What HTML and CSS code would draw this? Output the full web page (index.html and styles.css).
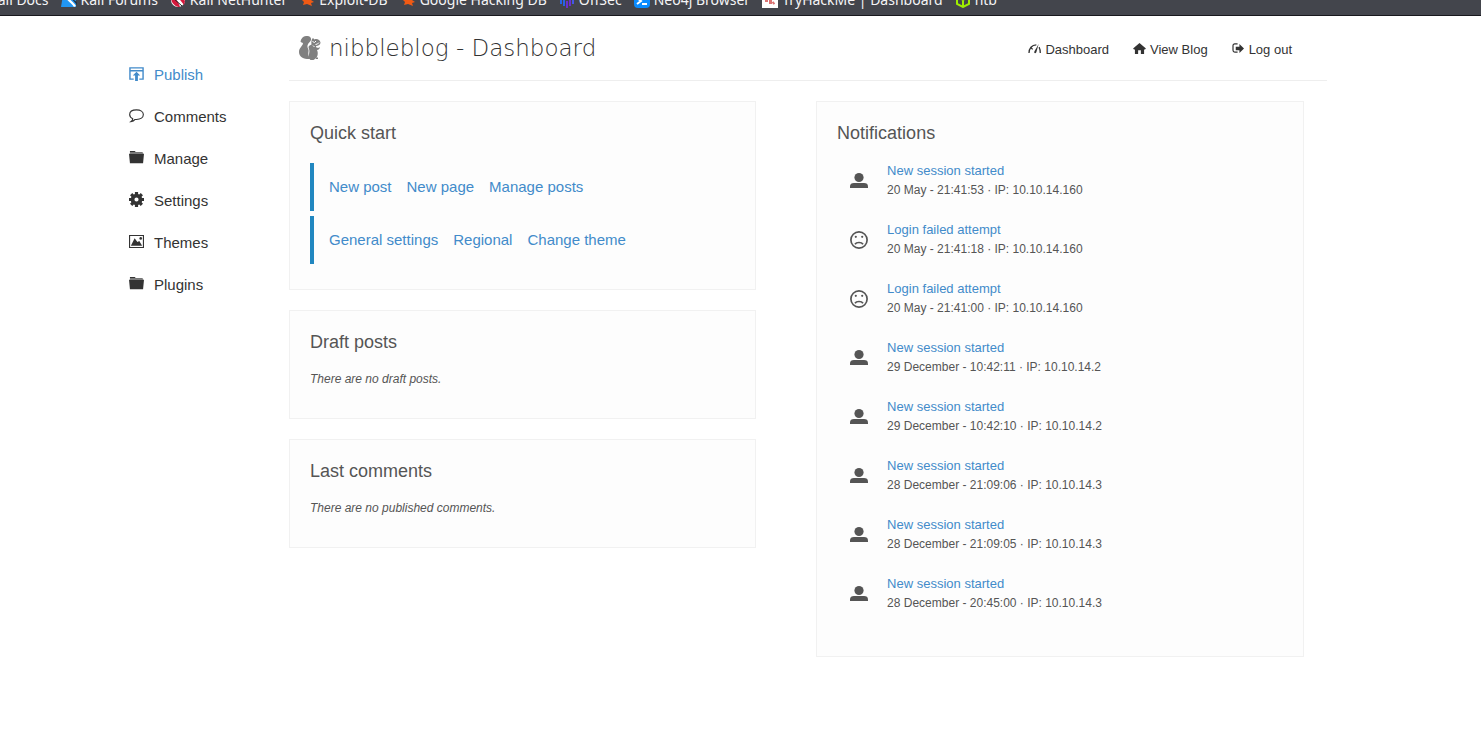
FILE: index.html
```html
<!DOCTYPE html>
<html lang="en">
<head>
<meta charset="utf-8">
<title>nibbleblog - Dashboard</title>
<link rel="stylesheet" href="styles.css">
</head>
<body>
<svg class="sprite" aria-hidden="true">
  <symbol id="folder" viewBox="0 0 16 16"><path fill="#777" d="M1 3V2l1-1h4l1 1h7l1 1v1H1z"/><path d="M1 1h5l1 1H1zM0 4h16l-1 10H1z"/></symbol>
  <symbol id="user" viewBox="0 0 18 18"><circle cx="9" cy="5.500" r="4.600"/><path d="M0 16v-1.500C0 12 1.500 11 4 11h10c2.500 0 4 1 4 3.500V16z"/></symbol>
  <symbol id="sad" viewBox="0 0 18 18"><g fill="none" stroke="currentColor" stroke-width="1.700"><circle cx="9" cy="9" r="8.100"/><path d="M5 13.300c1.500-2.400 6.500-2.400 8 0"/></g><circle cx="5.800" cy="5.800" r="1.100"/><circle cx="12.200" cy="5.800" r="1.100"/></symbol>
  <symbol id="bug" viewBox="0 0 16 16"><path fill="#f05a14" d="M1 6l4 1-1-5 5 4 5-1-2 3 3 2-3 1 1 3-5-2-4 1 1-3z"/></symbol>
</svg>

<nav class="bookmarks" aria-label="Bookmarks">
  <a href="#">Kali Docs</a>
  <a href="#"><svg viewBox="0 0 16 16"><path fill="#2196f3" d="M2 3h13v12H0z"/><path fill="#fff" d="M3 2c3 4 7 5 12 12l-2 1C10 10 5 9 3 2z"/><path fill="#234" d="M10 6l6 4v3z"/></svg>Kali Forums</a>
  <a href="#"><svg viewBox="0 0 16 16"><circle cx="8" cy="8" r="7" fill="#fff"/><path fill="#d5193d" d="M1 5c5 1 7 4 9 10-5 0-9-4-9-10zM7 4l7 9 1-4-5-7z"/><path stroke="#222" d="M3 6l9 8"/></svg>Kali NetHunter</a>
  <a href="#"><svg><use href="#bug"/></svg>Exploit-DB</a>
  <a href="#"><svg><use href="#bug"/></svg>Google Hacking DB</a>
  <a href="#"><svg viewBox="0 0 16 16" fill="none" stroke-width="2"><path stroke="#2864e8" d="M2 6v6M5 5v9"/><path stroke="#6a2fd0" d="M8 9v7M11 5v9"/><path stroke="#4556e4" d="M14 6v6"/></svg>OffSec</a>
  <a href="#"><svg viewBox="0 0 16 16"><rect width="16" height="16" rx="4" fill="#0a8cff"/><path fill="none" stroke="#fff" stroke-width="2" d="M3 6l4 3-4 3M8 12h5"/></svg>Neo4j Browser</a>
  <a href="#"><svg viewBox="0 0 16 16"><path fill="#fff" d="M0 0h16v16H0z"/><path fill="none" stroke="#db7474" stroke-width="2" stroke-dasharray="3 1" d="M3 9h7l3 4M7 11h5"/></svg>TryHackMe | Dashboard</a>
  <a href="#"><svg viewBox="0 0 16 16"><path fill="none" stroke="#9fef00" stroke-width="2" d="M8 1l6 3v8l-6 3-6-3V4zM2 4l6 4 6-4M8 8v7"/></svg>htb</a>
</nav>

<div class="page">
  <nav class="sidebar" aria-label="Administration">
    <a class="active" href="#"><svg viewBox="0 0 16 16"><path fill="none" stroke="currentColor" stroke-width="1.500" d="M5 14H1V2h14v12h-4M1 5h14"/><path d="M8 6l4 4H9.500v6h-3v-6H4z"/></svg>Publish</a>
    <a href="#"><svg viewBox="0 0 16 16"><path fill="none" stroke="currentColor" stroke-width="1.200" d="M4 11.500C2 10.500.7 9 .7 7c0-3 3-5 7.300-5s7.300 2 7.300 5-3 5.200-7.300 5.200H6.500Q5 14.300 2 14.500c1.500-1 2-2 2-3z"/></svg>Comments</a>
    <a href="#"><svg><use href="#folder"/></svg>Manage</a>
    <a href="#"><svg viewBox="0 0 16 16"><circle cx="8" cy="8" r="4.200" fill="none" stroke="currentColor" stroke-width="4"/><path fill="none" stroke="currentColor" stroke-width="3.400" d="M8 0v3M8 13v3M0 8h3M13 8h3M2.300 2.300l2 2M11.700 11.700l2 2M2.300 13.700l2-2M11.700 4.300l2-2"/></svg>Settings</a>
    <a href="#"><svg viewBox="0 0 16 16"><path fill="none" stroke="currentColor" stroke-width="1.200" d="M.6 1.600h14.800v12.800H.6z"/><path d="M2 12.500l4-8 3 4 2-1 3 5z"/><circle cx="12.500" cy="4.700" r="1.400"/></svg>Themes</a>
    <a href="#"><svg><use href="#folder"/></svg>Plugins</a>
  </nav>

  <div class="main">
    <header class="header">
      <svg class="logo" viewBox="0 0 22 24"><path d="M7 0c3.500-.3 5.500 1.500 5 4-.5 2-3 3-3.500 5.500C8 12 10 13 9.500 15.500c-.5 3 0 5 2 7.500C6 23.500 0 21.500 0 16c0-4 3.500-6 4-8.500C3.500 6 2 7 1.500 5.500 2 2.500 4 .3 7 0z"/><path d="M12.500 8.500C12 6 12.500 3 14 2l1.500 1.500C18 2.300 21 4 21.500 6.500c0 2-2 3.500-4.500 3.500 0 2 2 2.500 4 1-.3 2-1.500 2.800-3 3 1.500 3 1 8-3.500 10h-3c-2-1.500-2-4-1.300-7C11 14 9.500 12.500 9.500 11c.5-1.500 1.500-2 3-2.500z"/><path fill="none" stroke="#fff" d="M13.500 5.500l2 1 1.500-1.500M16.500 8.500l2-.5 1.500-1.500M14 9.500l1.500 1.500"/><path d="M17 21.500h2V23h-2z"/></svg>
      <h1>nibbleblog - Dashboard</h1>
      <nav class="usernav" aria-label="Account">
        <a href="#"><svg viewBox="0 0 14 12"><path fill="none" stroke="currentColor" stroke-width="1.400" d="M1 11C1 6 4 2 9 2M12 4.500c.8 1.500 1.300 3 1.300 6.500M3.500 5.500l1.500 1.500"/><path d="M11.500 1L9 10c-1 2-3 1-2-1z"/></svg>Dashboard</a>
        <a href="#"><svg viewBox="0 0 14 12"><path d="M7 0l7 6-1 1h-1v5H8.500V8h-3v4H2V7H1L0 6z"/></svg>View Blog</a>
        <a href="#"><svg viewBox="0 0 14 12"><path fill="none" stroke="currentColor" stroke-width="1.300" d="M6 1H3Q1 1 1 3v5q0 2 2 2h3"/><path d="M4 4h4V1l5 5-5 5V8H4z"/></svg>Log out</a>
      </nav>
    </header>

    <div class="columns">
      <div class="column">
        <section class="panel">
          <h2>Quick start</h2>
          <div class="quicklist">
            <div class="quick"><a href="#">New post</a><a href="#">New page</a><a href="#">Manage posts</a></div>
            <div class="quick"><a href="#">General settings</a><a href="#">Regional</a><a href="#">Change theme</a></div>
          </div>
        </section>
        <section class="panel">
          <h2>Draft posts</h2>
          <p class="empty">There are no draft posts.</p>
        </section>
        <section class="panel">
          <h2>Last comments</h2>
          <p class="empty">There are no published comments.</p>
        </section>
      </div>
      <section class="panel">
        <h2>Notifications</h2>
        <ul class="notices">
          <li><svg><use href="#user"/></svg><div><a href="#">New session started</a><p>20 May - 21:41:53 · IP: 10.10.14.160</p></div></li>
          <li><svg><use href="#sad"/></svg><div><a href="#">Login failed attempt</a><p>20 May - 21:41:18 · IP: 10.10.14.160</p></div></li>
          <li><svg><use href="#sad"/></svg><div><a href="#">Login failed attempt</a><p>20 May - 21:41:00 · IP: 10.10.14.160</p></div></li>
          <li><svg><use href="#user"/></svg><div><a href="#">New session started</a><p>29 December - 10:42:11 · IP: 10.10.14.2</p></div></li>
          <li><svg><use href="#user"/></svg><div><a href="#">New session started</a><p>29 December - 10:42:10 · IP: 10.10.14.2</p></div></li>
          <li><svg><use href="#user"/></svg><div><a href="#">New session started</a><p>28 December - 21:09:06 · IP: 10.10.14.3</p></div></li>
          <li><svg><use href="#user"/></svg><div><a href="#">New session started</a><p>28 December - 21:09:05 · IP: 10.10.14.3</p></div></li>
          <li><svg><use href="#user"/></svg><div><a href="#">New session started</a><p>28 December - 20:45:00 · IP: 10.10.14.3</p></div></li>
        </ul>
      </section>
    </div>
  </div>
</div>
</body>
</html>
```

FILE: styles.css
```css
* { box-sizing: border-box; }
body {
  margin: 0;
  background: #fff;
  color: #555;
  font: 12px/20px "Liberation Sans", Arial, sans-serif;
}
a { color: #428bca; text-decoration: none; }
h1, h2, p, ul { margin: 0; padding: 0; }
svg { flex: none; fill: currentColor; }
.sprite { display: none; }

.bookmarks {
  display: flex;
  align-items: flex-end;
  gap: 12px;
  height: 16px;
  padding-bottom: 5px;
  overflow: hidden;
  background: #43454c;
  border-bottom: 1px solid #18181d;
}
.bookmarks a {
  display: flex;
  align-items: center;
  gap: 4px;
  color: #f4f4f6;
  font: 14px/20px "Noto Sans", sans-serif;
  white-space: nowrap;
}
.bookmarks a:first-child { margin-left: -11px; }
.bookmarks svg { width: 16px; height: 16px; }

.page {
  display: grid;
  grid-template-columns: 160px 1fr;
  padding: 0 154px 24px 129px;
}
.sidebar {
  display: flex;
  flex-direction: column;
  gap: 22px;
  padding-top: 49px;
}
.sidebar a {
  display: flex;
  align-items: center;
  gap: 10px;
  color: #333;
  font-size: 15px;
}
.sidebar a.active { color: #428bca; }
.sidebar svg { width: 15px; height: 15px; margin-bottom: 3px; }

.header {
  display: flex;
  align-items: center;
  height: 65px;
  padding: 0 35px 0 10px;
  border-bottom: 1px solid #eee;
}
.logo { width: 22px; height: 24px; color: #808080; }
.header h1 {
  margin-left: 8px;
  color: #333;
  font: 200 23px/32px "DejaVu Sans", sans-serif;
}
.usernav { display: flex; gap: 24px; margin-left: auto; padding-top: 4px; }
.usernav a {
  display: flex;
  align-items: center;
  gap: 4px;
  color: #333;
  font-size: 13px;
}
.usernav svg { width: 13px; height: 11px; margin-bottom: 3px; }

.columns {
  display: grid;
  grid-template-columns: 45% 47%;
  gap: 60px;
  align-items: start;
  padding-top: 20px;
}
.column { display: grid; gap: 20px; }
.panel {
  padding: 20px 20px 25px;
  background: #fdfdfd;
  border: 1px solid #f1f1f1;
}
.panel h2 {
  margin-bottom: 16px;
  font-size: 18px;
  font-weight: 400;
  line-height: 22px;
}
.quicklist { display: grid; gap: 5px; padding-top: 3px; }
.quick {
  display: flex;
  gap: 15px;
  padding: 14px 15px;
  border-left: 4px solid #2187c0;
  font-size: 15px;
}
.empty { padding-bottom: 4px; font-style: italic; }
.notices { padding-top: 1px; list-style: none; }
.notices li {
  display: flex;
  align-items: flex-start;
  gap: 19px;
  padding: 0 0 20px 13px;
}
.notices li:last-child { padding-bottom: 18px; }
.notices svg { width: 18px; height: 18px; margin-top: 11px; }
.notices a { display: block; font-size: 13px; line-height: 19px; }
```
